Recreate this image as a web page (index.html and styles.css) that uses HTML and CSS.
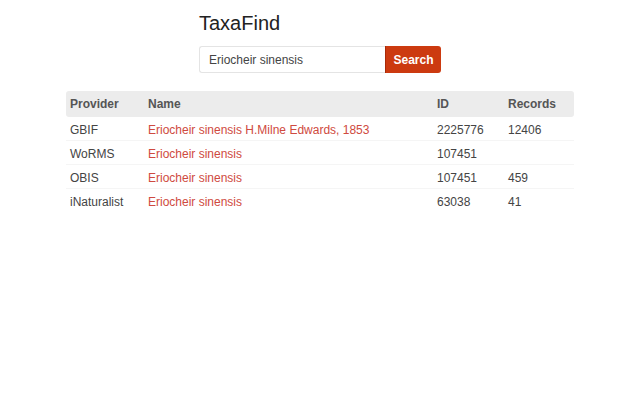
FILE: index.html
```html
<!DOCTYPE html>
<html lang="en">
<head>
    <meta charset="UTF-8">
    <meta name="viewport" content="width=device-width, initial-scale=1.0">
    <title>TaxaFind</title>
    <link rel="stylesheet" href="styles.css">
</head>
<body>
    <div class="container">
        <div class="search-box">
            <h1>TaxaFind</h1>
            <form class="search-form" onsubmit="return false">
                <input type="text" id="query" value="Eriocheir sinensis">
                <button type="submit">Search</button>
            </form>
        </div>
        <table class="results">
            <thead>
                <tr>
                    <th class="col-provider">Provider</th>
                    <th class="col-name">Name</th>
                    <th class="col-id">ID</th>
                    <th class="col-records">Records</th>
                </tr>
            </thead>
            <tbody>
                <tr>
                    <td>GBIF</td>
                    <td><a href="#">Eriocheir sinensis H.Milne Edwards, 1853</a></td>
                    <td>2225776</td>
                    <td>12406</td>
                </tr>
                <tr>
                    <td>WoRMS</td>
                    <td><a href="#">Eriocheir sinensis</a></td>
                    <td>107451</td>
                    <td></td>
                </tr>
                <tr>
                    <td>OBIS</td>
                    <td><a href="#">Eriocheir sinensis</a></td>
                    <td>107451</td>
                    <td>459</td>
                </tr>
                <tr class="strong-line">
                    <td>iNaturalist</td>
                    <td><a href="#">Eriocheir sinensis</a></td>
                    <td>63038</td>
                    <td>41</td>
                </tr>
            </tbody>
        </table>
    </div>
</body>
</html>
```

FILE: styles.css
```css
body {
    font-family: "Liberation Sans", Arial, sans-serif;
    color: #333;
    background: #fff;
    margin: 0;
}
.container {
    width: 508px;
    margin: 0 auto;
    padding-top: 11px;
}
.search-box {
    width: 242px;
    margin: 0 auto;
}
h1 {
    font-size: 20px;
    font-weight: normal;
    margin: 0 0 11px 0;
    color: #222;
    line-height: 24px;
}
.search-form {
    display: flex;
}
.search-form input {
    width: 186px;
    height: 27px;
    box-sizing: border-box;
    padding: 0 9px;
    border: 1px solid #e4e4e4;
    border-right: none;
    border-radius: 3px 0 0 3px;
    font-family: inherit;
    font-size: 12px;
    color: #444;
    outline: none;
}
.search-form button {
    width: 56px;
    height: 27px;
    border: none;
    border-left: 1px solid #a82a08;
    border-radius: 0 3px 3px 0;
    background: #cc3a10;
    color: #fff;
    font-family: inherit;
    font-size: 12px;
    font-weight: bold;
    cursor: pointer;
}
.results {
    width: 100%;
    margin-top: 18px;
    border-collapse: collapse;
    font-size: 12px;
}
.results th {
    background: #ececec;
    text-align: left;
    font-weight: bold;
    color: #555;
    height: 26px;
    padding: 0 4px;
}
.results th:first-child {
    border-radius: 3px 0 0 3px;
}
.results th:last-child {
    border-radius: 0 3px 3px 0;
}
.results td {
    height: 21px;
    padding: 2px 4px 0 4px;
    border-bottom: 1px solid #f5f5f5;
    color: #444;
}
.results tr.strong-line td {
    border-top: 1px solid #e2e2e2;
    border-bottom: none;
}
.results a {
    color: #cf4a40;
    text-decoration: none;
}
.col-provider { width: 70px; }
.col-name { width: 281px; }
.col-id { width: 63px; }
```
